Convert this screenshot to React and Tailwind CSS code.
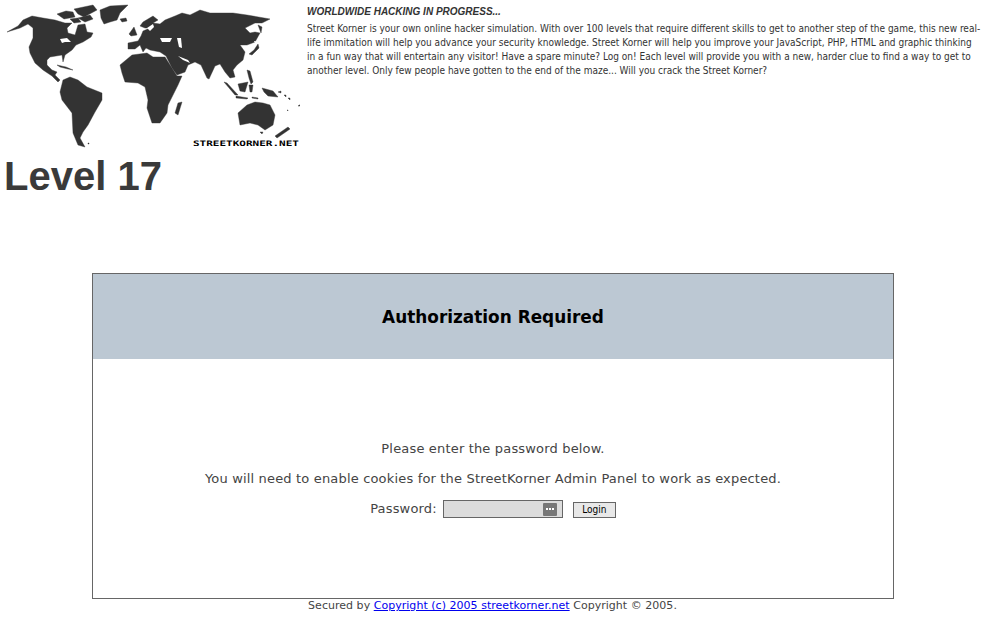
import React from "react";

const land = [
  // north america
  "7,32 18,26 23,20 32,16 43,18 55,20 65,23 72,23 67,28 68,33 75,35 78,25 85,24 87,32 93,33 91,37 83,42 76,45 72,50 65,55 63,62 62,55 50,57 47,60 47,65 52,70 57,72 55,75 60,80 58,82 52,76 43,70 35,63 30,53 29,47 33,38 33,28 28,24 20,28",
  "57,14 66,11 73,12 75,17 64,19",
  "74,9 93,5 97,10 84,17 78,14",
  "78,18 90,15 93,19 85,22",
  "70,19 78,18 81,22 74,23",
  "57,65 66,67 73,70 68,69 60,67",
  // greenland, iceland, uk
  "100,10 110,6 128,5 120,13 117,20 110,22 104,24 101,18",
  "120,19 126,18 127,21 122,22",
  "129,34 134,27 137,35 131,36",
  // south america
  "60,92 63,80 70,77 78,80 87,87 102,93 102,100 95,112 88,125 83,132 80,138 85,147 78,145 73,133 72,113 62,100",
  "88,143 89,143 89,144 88,144",
  // africa
  "120,65 132,55 147,53 153,57 165,57 177,76 182,76 178,85 168,105 167,113 160,123 152,123 147,108 148,100 145,87 138,83 125,82 122,73",
  "178,103 182,102 178,115 175,113",
  // eurasia
  "128,43 138,41 141,36 143,31 150,28 145,28 140,26 143,22 153,16 158,20 153,23 160,24 165,20 175,16 182,13 190,15 200,10 210,13 223,13 233,13 247,15 270,19 262,23 255,23 245,28 250,33 255,32 260,33 255,42 247,45 240,45 245,52 243,60 237,65 233,70 235,77 230,78 225,72 220,64 215,66 209,79 207,78 201,65 195,62 188,65 185,72 177,75 172,68 166,56 160,52 155,51 150,50 146,48 143,52 140,45 135,49 128,49",
  // japan, kamchatka side
  "258,44 259,48 252,55 249,54 254,50",
  "258,25 262,27 261,33",
  // indonesia and pacific
  "247,70 250,71 253,82 251,84 249,78",
  "224,82 227,83 238,95 235,95",
  "236,96 248,98 247,99 236,98",
  "238,84 248,82 245,92 240,91",
  "249,85 253,85 252,92 250,92",
  "262,88 273,91 278,97 268,96 264,92",
  "252,97 258,98 258,99 252,98",
  "278,92 281,91 281,93",
  "284,95 286,95 286,97",
  "288,98 290,98 290,100",
  "287,110 288,110 288,111",
  "298,106 301,104 300,106",
  // australia, tasmania, new zealand
  "238,113 247,105 255,102 263,103 270,105 275,115 273,125 265,130 258,125 250,123 240,125",
  "260,132 263,132 262,134",
  "288,127 290,129 277,138 275,136",
];

const water = [
  "60,39 67,38 71,42 65,42 62,43",
  "160,38 172,38 170,42 162,42",
  "177,38 181,38 182,48 179,47",
  "178,56 188,60 190,63 183,60",
  "147,28 153,24 154,27 150,31",
  "254,41 256,41 255,43",
];

export default function App() {
  return (
    <div className="w-[982px] h-[617px] overflow-hidden bg-white font-['DejaVu_Sans',sans-serif] text-[#444]">
      <div className="flex h-[153px]">
        <svg className="w-[300px] h-[150px] shrink-0" viewBox="0 0 300 150">
          {land.map((p, i) => (
            <polygon key={i} points={p} fill="#333" stroke="#333" strokeWidth="0.4" strokeLinejoin="round" />
          ))}
          {water.map((p, i) => (
            <polygon key={i} points={p} fill="#fff" />
          ))}
          <text
            x="193"
            y="146"
            textLength="106"
            lengthAdjust="spacingAndGlyphs"
            fontSize="7.5"
            fontWeight="bold"
            fill="#000"
            fontFamily="'DejaVu Sans Mono', monospace"
          >
            STREETKORNER.NET
          </text>
        </svg>
        <div className="pl-[7px] pt-[5px] font-['DejaVu_Sans_Condensed','DejaVu_Sans',sans-serif] text-[10px] leading-[14px] text-[#333] whitespace-nowrap">
          <p className="font-['Liberation_Sans',sans-serif] font-bold italic text-[10px] leading-[14px] mb-[3px]">
            WORLDWIDE HACKING IN PROGRESS...
          </p>
          <p>
            Street Korner is your own online hacker simulation. With over 100 levels that require different skills to get to another step of the game, this new real-
            <br />
            life immitation will help you advance your security knowledge. Street Korner will help you improve your JavaScript, PHP, HTML and graphic thinking
            <br />
            in a fun way that will entertain any visitor! Have a spare minute? Log on! Each level will provide you with a new, harder clue to find a way to get to
            <br />
            another level. Only few people have gotten to the end of the maze... Will you crack the Street Korner?
          </p>
        </div>
      </div>

      <h1 className="pl-[4px] font-['Liberation_Sans',sans-serif] font-bold text-[40px] leading-[46px] text-[#3a3a3a]">
        Level 17
      </h1>

      <div className="mt-[74px] mx-[92px] w-[802px] h-[326px] border border-[#666]">
        <div className="h-[85px] pt-[2px] bg-[#bcc8d3] flex items-center justify-center">
          <h2 className="font-bold text-[16.9px] text-black">Authorization Required</h2>
        </div>
        <div className="pt-[82px] flex flex-col items-center text-[13px] leading-[16px] tracking-[0.17px]">
          <p>Please enter the password below.</p>
          <p className="mt-[14px]">You will need to enable cookies for the StreetKorner Admin Panel to work as expected.</p>
          <form className="mt-[13px] flex items-center">
            <label>Password:</label>
            <div className="ml-[6px] w-[120px] h-[18px] bg-[#dcdcdc] border border-[#666] flex items-center justify-end pr-[5px]">
              <div className="w-[14px] h-[13px] rounded-[1px] bg-[#777] flex items-center justify-center gap-[1px]">
                <span className="w-[2px] h-[2px] bg-white" />
                <span className="w-[2px] h-[2px] bg-white" />
                <span className="w-[2px] h-[2px] bg-white" />
              </div>
            </div>
            <button
              type="button"
              className="ml-[10px] mt-[2px] w-[43px] h-[16px] bg-[#e8e8e8] border border-[#666] flex items-center justify-center font-['DejaVu_Sans_Condensed','DejaVu_Sans',sans-serif] text-[10px] tracking-normal text-black"
            >
              Login
            </button>
          </form>
        </div>
      </div>

      <p className="pl-[3px] text-center text-[11px] leading-[13px] tracking-[0.03px] text-[#444]">
        Secured by{" "}
        <a href="#" className="text-[#00e] underline">
          Copyright (c) 2005 streetkorner.net
        </a>{" "}
        Copyright © 2005.
      </p>
    </div>
  );
}
